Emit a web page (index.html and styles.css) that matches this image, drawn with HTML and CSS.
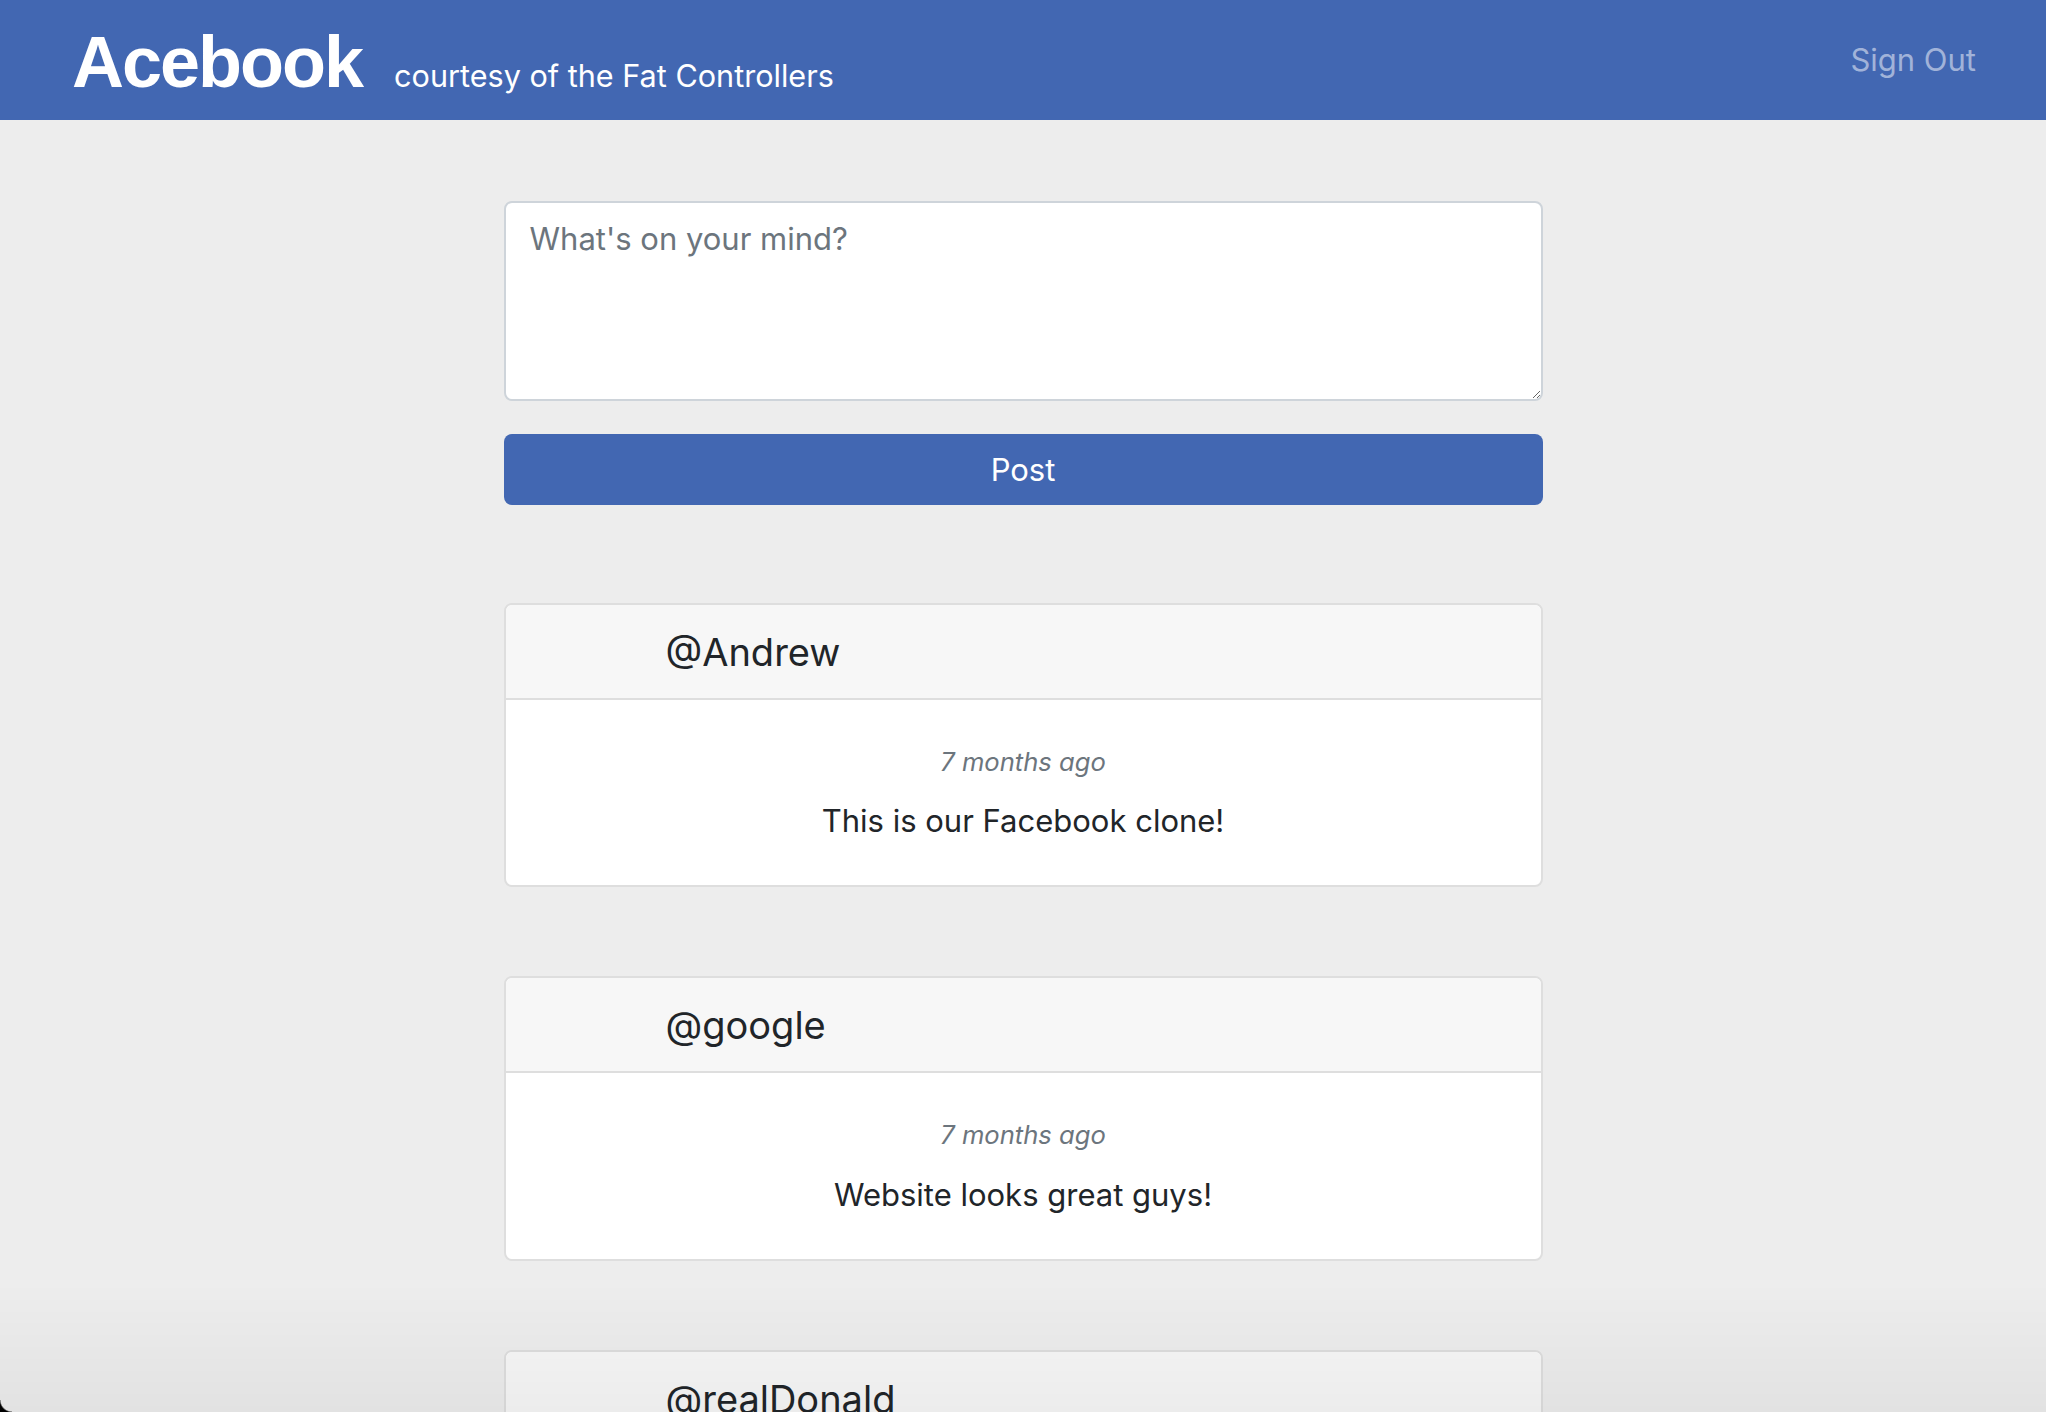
FILE: index.html
```html
<!DOCTYPE html>
<html lang="en">
<head>
<meta charset="utf-8">
<title>Acebook</title>
<link rel="stylesheet" href="styles.css">
</head>
<body>
<nav class="navbar">
  <div class="brand">
    <span class="logo">Acebook</span>
    <span class="tagline">courtesy of the Fat Controllers</span>
  </div>
  <a class="signout" href="#">Sign Out</a>
</nav>

<main class="feed">
  <form class="composer">
    <textarea class="composer-input" placeholder="What's on your mind?"></textarea>
    <button type="button" class="post-btn">Post</button>
  </form>

  <div class="posts">
    <article class="card">
      <header class="card-header">@Andrew</header>
      <div class="card-body">
        <div class="time">7 months ago</div>
        <p class="message">This is our Facebook clone!</p>
      </div>
    </article>

    <article class="card">
      <header class="card-header">@google</header>
      <div class="card-body">
        <div class="time">7 months ago</div>
        <p class="message">Website looks great guys!</p>
      </div>
    </article>

    <article class="card">
      <header class="card-header">@realDonald</header>
      <div class="card-body">
        <div class="time">7 months ago</div>
        <p class="message">&nbsp;</p>
      </div>
    </article>
  </div>
</main>

<div class="window-shade"></div>
<div class="window-corner"></div>
</body>
</html>
```

FILE: styles.css
```css
html, body {
  margin: 0;
  padding: 0;
}

body {
  background: #ededed;
  font-family: "Inter", "Liberation Sans", sans-serif;
  color: #212529;
  font-size: 31px;
  line-height: 1.5;
}

.navbar {
  display: flex;
  align-items: flex-start;
  height: 120px;
  box-sizing: border-box;
  padding: 26px 70px 0 72px;
  background: #4267b2;
}

.brand {
  display: flex;
  align-items: baseline;
}

.logo {
  font-family: "Liberation Sans", sans-serif;
  font-weight: 700;
  font-size: 72px;
  line-height: 72px;
  letter-spacing: -2px;
  color: #ffffff;
}

.tagline {
  margin-left: 32px;
  font-size: 30.6px;
  color: #ffffff;
  line-height: 1.2;
}

.signout {
  margin-left: auto;
  margin-top: 10px;
  font-size: 31px;
  line-height: 48px;
  color: #a1b3d9;
  text-decoration: none;
}

.feed {
  width: 1039px;
  margin: 0 auto;
  padding-top: 81px;
}

.composer {
  display: flex;
  flex-direction: column;
  gap: 33px;
}

.composer-input {
  display: block;
  box-sizing: border-box;
  width: 100%;
  height: 200px;
  margin: 0;
  padding: 12px 24px;
  border: 2px solid #ced4da;
  border-radius: 8px;
  background: #fff;
  font-family: inherit;
  font-size: 31px;
  line-height: 48px;
  color: #495057;
}

.composer-input::placeholder {
  color: #6c757d;
}

.post-btn {
  display: block;
  width: 100%;
  height: 71px;
  margin: 0;
  border: none;
  border-radius: 8px;
  background: #4267b2;
  color: #ffffff;
  font-family: inherit;
  font-size: 31px;
  line-height: 48px;
}

.posts {
  display: flex;
  flex-direction: column;
  gap: 89px;
  margin-top: 98px;
  padding-bottom: 80px;
}

.card {
  border: 2px solid #dedede;
  border-radius: 8px;
  background: #ffffff;
  overflow: hidden;
}

.card-header {
  height: 95px;
  box-sizing: border-box;
  padding-left: 160px;
  background: #f7f7f7;
  border-bottom: 2px solid #dedede;
  font-size: 38px;
  line-height: 95px;
}

.card-body {
  padding: 43px 40px 40px;
  text-align: center;
}

.time {
  font-size: 25.6px;
  line-height: 38.4px;
  font-style: italic;
  color: #6c757d;
}

.message {
  margin: 16px 0 0;
  font-size: 31px;
  line-height: 48px;
}

.window-shade {
  position: fixed;
  left: 0;
  right: 0;
  bottom: 0;
  height: 130px;
  pointer-events: none;
  background: linear-gradient(to bottom, rgba(0,0,0,0), rgba(0,0,0,0.045));
}

.window-corner {
  position: fixed;
  left: 0;
  bottom: 0;
  width: 12px;
  height: 12px;
  pointer-events: none;
  background: radial-gradient(circle at 100% 0, rgba(0,0,0,0) 11px, #000 12.5px);
}
```
